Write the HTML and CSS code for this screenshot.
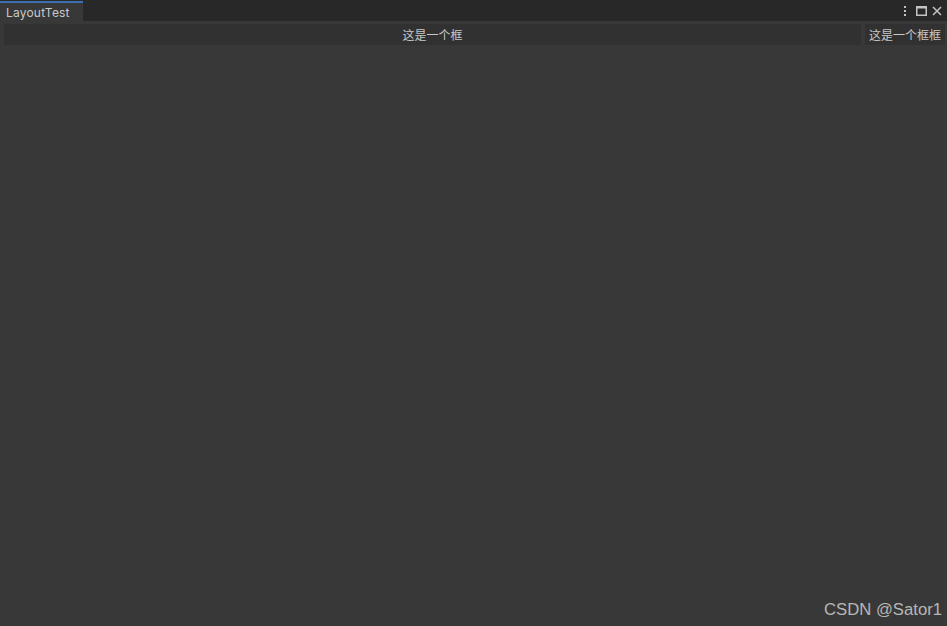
FILE: index.html
```html
<!DOCTYPE html>
<html>
<head>
<meta charset="utf-8">
<link rel="stylesheet" href="styles.css">
</head>
<body>
<div class="window">
  <div class="titlebar">
    <div class="tab">LayoutTest</div>
    <div class="controls">
      <svg class="icon kebab" width="6" height="12" viewBox="0 0 6 12"><rect x="2" y="1" width="2" height="2" fill="#c4c4c4"/><rect x="2" y="5" width="2" height="2" fill="#c4c4c4"/><rect x="2" y="9" width="2" height="2" fill="#c4c4c4"/></svg>
      <svg class="icon" width="11" height="10" viewBox="0 0 11 10"><rect x="0.75" y="0.75" width="9.5" height="8.5" fill="none" stroke="#c4c4c4" stroke-width="1.5"/><rect x="0" y="0" width="11" height="2.5" fill="#c4c4c4"/></svg>
      <svg class="icon" width="10" height="10" viewBox="0 0 10 10"><path d="M1 1 L9 9 M9 1 L1 9" stroke="#c4c4c4" stroke-width="1.5"/></svg>
    </div>
  </div>
  <div class="content">
    <div class="row">
      <div class="box box-wide">这是一个框</div>
      <div class="box box-narrow">这是一个框框</div>
    </div>
  </div>
  <div class="watermark">CSDN @Sator1</div>
</div>
</body>
</html>
```
FILE: styles.css
```css
html, body {
  margin: 0;
  padding: 0;
  width: 947px;
  height: 626px;
  overflow: hidden;
  background: #383838;
  font-family: Inter, "Noto Sans", "Noto Sans CJK SC", sans-serif;
}
.window {
  position: relative;
  width: 947px;
  height: 626px;
  display: flex;
  flex-direction: column;
}
.titlebar {
  height: 21px;
  background: #282828;
  display: flex;
  align-items: flex-end;
  justify-content: space-between;
}
.tab {
  width: 77px;
  height: 17px;
  padding-left: 6px;
  padding-top: 1px;
  background: #383838;
  border-top: 2px solid #3a72b0;
  color: #c8c8c8;
  font-size: 12px;
  letter-spacing: 0.2px;
  line-height: 18px;
}
.controls {
  align-self: stretch;
  display: flex;
  align-items: center;
  gap: 5px;
  padding-right: 5px;
}
.kebab { margin-right: 3px; }
.icon { display: block; }
.content {
  flex: 1;
  padding: 3px 2px 0 4px;
}
.row {
  display: flex;
  gap: 4px;
  height: 21px;
}
.box {
  background: #313131;
  color: #c8c8c8;
  font-family: "Noto Sans CJK SC", sans-serif;
  font-size: 12px;
  line-height: 21px;
  text-align: center;
}
.box-wide { flex: 1; }
.box-narrow { width: 80px; }
.watermark {
  position: absolute;
  right: 5px;
  bottom: 6px;
  color: rgba(225,225,225,0.75);
  font-family: "Liberation Sans", Arial, sans-serif;
  font-size: 16.7px;
}
```
